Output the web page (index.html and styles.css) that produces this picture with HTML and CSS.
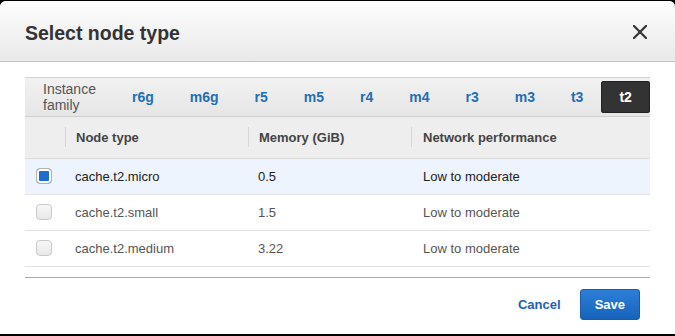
FILE: index.html
```html
<!DOCTYPE html>
<html lang="en">
<head>
    <meta charset="UTF-8">
    <meta name="viewport" content="width=device-width, initial-scale=1.0">
    <title>Select node type</title>
    <link rel="stylesheet" href="styles.css">
</head>
<body>
    <div class="modal">
        <div class="modal-header">
            <h2>Select node type</h2>
            <button class="close" aria-label="Close">
                <svg width="14" height="14" viewBox="0 0 14 14">
                    <path d="M1 1 L13 13 M13 1 L1 13" stroke="#333" stroke-width="2.2" stroke-linecap="square"/>
                </svg>
            </button>
        </div>

        <div class="modal-body">
            <div class="families">
                <span class="family-label">Instance family</span>
                <a class="tab">r6g</a>
                <a class="tab">m6g</a>
                <a class="tab">r5</a>
                <a class="tab">m5</a>
                <a class="tab">r4</a>
                <a class="tab">m4</a>
                <a class="tab">r3</a>
                <a class="tab">m3</a>
                <a class="tab">t3</a>
                <a class="tab active">t2</a>
            </div>

            <table class="nodes">
                <colgroup>
                    <col class="col-check">
                    <col class="col-type">
                    <col class="col-mem">
                    <col>
                </colgroup>
                <thead>
                    <tr>
                        <th></th>
                        <th><div class="th-inner">Node type</div></th>
                        <th><div class="th-inner">Memory (GiB)</div></th>
                        <th><div class="th-inner">Network performance</div></th>
                    </tr>
                </thead>
                <tbody>
                    <tr class="selected">
                        <td><span class="check on"></span></td>
                        <td>cache.t2.micro</td>
                        <td>0.5</td>
                        <td>Low to moderate</td>
                    </tr>
                    <tr>
                        <td><span class="check"></span></td>
                        <td>cache.t2.small</td>
                        <td>1.5</td>
                        <td>Low to moderate</td>
                    </tr>
                    <tr>
                        <td><span class="check"></span></td>
                        <td>cache.t2.medium</td>
                        <td>3.22</td>
                        <td>Low to moderate</td>
                    </tr>
                </tbody>
            </table>
        </div>

        <div class="modal-footer">
            <a class="cancel">Cancel</a>
            <button class="save">Save</button>
        </div>
    </div>
</body>
</html>
```

FILE: styles.css
```css
*{
    box-sizing: border-box;
    font-family: "Liberation Sans", Arial, sans-serif;
}
body{
    margin: 0;
    background-color: #000;
    overflow: hidden;
}
.modal{
    margin-top: 1px;
    height: 333px;
    background-color: #fff;
    border-radius: 6px 6px 0 0;
    overflow: hidden;
}

.modal-header{
    display: flex;
    align-items: center;
    justify-content: space-between;
    height: 61px;
    padding: 4px 28px 0 25px;
    background: linear-gradient(#fdfdfd, #e9e9e9);
    border-bottom: 1px solid #c4c4c4;
}
.modal-header h2{
    margin: 0;
    font-size: 19.5px;
    font-weight: bold;
    color: #333;
}
.close{
    all: unset;
    display: flex;
    width: 14px;
    height: 14px;
    margin-bottom: 3px;
    cursor: pointer;
}

.modal-body{
    margin: 15px 25px 0 25px;
}

.families{
    display: flex;
    align-items: center;
    height: 40px;
    background: linear-gradient(#f1f1f1, #e6e6e6);
    border-top: 1px solid #d2d2d2;
    border-bottom: 1px solid #cfcfcf;
}
.family-label{
    width: min-content;
    box-sizing: content-box;
    padding: 0 18px;
    font-size: 14px;
    line-height: 16px;
    color: #555;
}
.tab{
    display: flex;
    align-items: center;
    height: 32px;
    padding: 0 18px;
    font-size: 14px;
    font-weight: bold;
    color: #1f6fb5;
    border-radius: 3px;
    cursor: pointer;
}
.tab.active{
    background-color: #333;
    box-shadow: inset 0 0 0 1px #222;
    color: #fff;
}

.nodes{
    width: 100%;
    border-collapse: collapse;
    font-size: 13px;
}
.col-check{
    width: 40px;
}
.col-type{
    width: 183px;
}
.col-mem{
    width: 163px;
}
.nodes th{
    height: 41px;
    padding: 0;
    background-color: #eeeeee;
    border-bottom: 1px solid #dcdcdc;
    text-align: left;
    font-weight: bold;
    color: #444;
}
.th-inner{
    display: flex;
    align-items: center;
    height: 20px;
    padding-left: 10px;
    border-left: 1px solid #d6d6d6;
}
.nodes th:last-child .th-inner{
    padding-left: 11px;
}
.nodes td{
    height: 36px;
    padding: 0 0 0 10px;
    border-bottom: 1px solid #e3e3e3;
    color: #555;
}
.nodes td:first-child{
    padding-left: 11px;
}
.nodes td:last-child{
    padding-left: 12px;
}
.nodes tr.selected td{
    background-color: #edf4fd;
    color: #222;
}

.check{
    display: block;
    width: 16px;
    height: 16px;
    border: 1px solid #c9c9c9;
    border-radius: 4px;
    background: linear-gradient(#f7f7f7, #e8e8e8);
}
.check.on{
    background: #1f6ece;
    box-shadow: inset 0 0 0 2px #fff;
    border-color: #b5b5b5;
}

.modal-footer{
    display: flex;
    align-items: center;
    justify-content: flex-end;
    gap: 19px;
    margin: 10px 25px 0 25px;
    padding: 11px 10px 0 0;
    border-top: 1px solid #aaa;
}
.cancel{
    font-size: 13px;
    font-weight: bold;
    color: #1b63b3;
    cursor: pointer;
}
.save{
    all: unset;
    height: 31px;
    padding: 0 14px;
    box-sizing: border-box;
    display: flex;
    align-items: center;
    font-size: 13px;
    font-weight: bold;
    color: #fff;
    background: linear-gradient(#2c7fd8, #1763bb);
    border: 1px solid #1a5aa6;
    border-radius: 3px;
    cursor: pointer;
}
```
